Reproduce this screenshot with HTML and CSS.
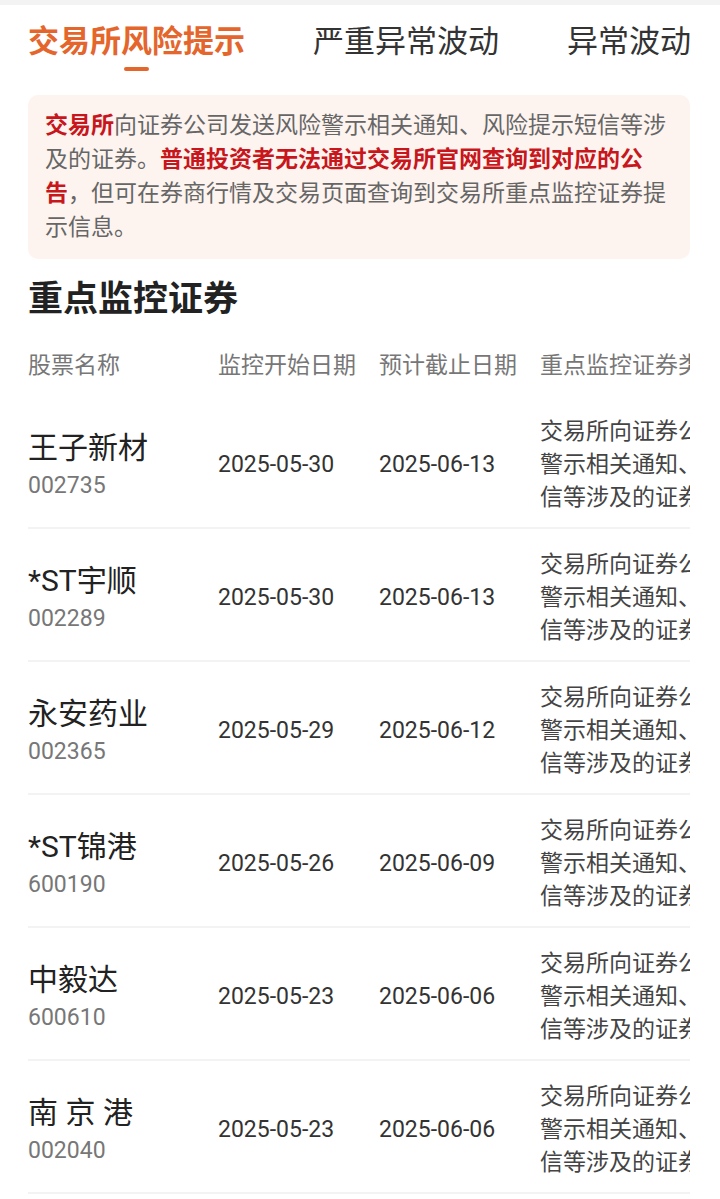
FILE: index.html
```html
<!DOCTYPE html>
<html lang="zh-CN">
<head>
  <meta charset="UTF-8">
  <meta name="viewport" content="width=device-width, initial-scale=1.0">
  <link rel="stylesheet" href="styles.css">
</head>
<body>
  <div class="top-band"></div>

  <nav class="tabs">
    <div class="tab active">交易所风险提示<span class="tab-line"></span></div>
    <div class="tab">严重异常波动</div>
    <div class="tab">异常波动</div>
  </nav>

  <div class="notice">
    <b>交易所</b>向证券公司发送风险警示相关通知、风险提示短信等涉及的证券。<b>普通投资者无法通过交易所官网查询到对应的公告</b>，但可在券商行情及交易页面查询到交易所重点监控证券提示信息。
  </div>

  <section class="watch">
    <h2>重点监控证券</h2>

    <div class="table">
      <div class="row head">
        <div>股票名称</div>
        <div>监控开始日期</div>
        <div>预计截止日期</div>
        <div>重点监控证券类型</div>
      </div>

      <div class="row">
        <div class="stock"><span class="name">王子新材</span><span class="code">002735</span></div>
        <div class="date">2025-05-30</div>
        <div class="date">2025-06-13</div>
        <div class="desc">交易所向证券公司发送风险警示相关通知、风险提示短信等涉及的证券</div>
      </div>

      <div class="row">
        <div class="stock"><span class="name">*ST宇顺</span><span class="code">002289</span></div>
        <div class="date">2025-05-30</div>
        <div class="date">2025-06-13</div>
        <div class="desc">交易所向证券公司发送风险警示相关通知、风险提示短信等涉及的证券</div>
      </div>

      <div class="row">
        <div class="stock"><span class="name">永安药业</span><span class="code">002365</span></div>
        <div class="date">2025-05-29</div>
        <div class="date">2025-06-12</div>
        <div class="desc">交易所向证券公司发送风险警示相关通知、风险提示短信等涉及的证券</div>
      </div>

      <div class="row">
        <div class="stock"><span class="name">*ST锦港</span><span class="code">600190</span></div>
        <div class="date">2025-05-26</div>
        <div class="date">2025-06-09</div>
        <div class="desc">交易所向证券公司发送风险警示相关通知、风险提示短信等涉及的证券</div>
      </div>

      <div class="row">
        <div class="stock"><span class="name">中毅达</span><span class="code">600610</span></div>
        <div class="date">2025-05-23</div>
        <div class="date">2025-06-06</div>
        <div class="desc">交易所向证券公司发送风险警示相关通知、风险提示短信等涉及的证券</div>
      </div>

      <div class="row">
        <div class="stock"><span class="name">南 京 港</span><span class="code">002040</span></div>
        <div class="date">2025-05-23</div>
        <div class="date">2025-06-06</div>
        <div class="desc">交易所向证券公司发送风险警示相关通知、风险提示短信等涉及的证券</div>
      </div>

      <div class="row">
        <div class="stock"><span class="name">国晟科技</span><span class="code">603778</span></div>
        <div class="date">2025-05-22</div>
        <div class="date">2025-06-05</div>
        <div class="desc">交易所向证券公司发送风险警示相关通知、风险提示短信等涉及的证券</div>
      </div>
    </div>
  </section>
</body>
</html>
```

FILE: styles.css
```css
body {
  font-family: Roboto, "Noto Sans CJK SC", sans-serif;
  background-color: #fff;
  color: #333;
  margin: 0;
  padding: 0;
  overflow: hidden;
}

.top-band {
  height: 5px;
  background-color: #f3f3f3;
}

.tabs {
  display: flex;
  gap: 68px;
  padding: 17px 28px 0;
}

.tab {
  display: flex;
  flex-direction: column;
  align-items: center;
  font-size: 31px;
  line-height: 40px;
  color: #333;
  white-space: nowrap;
}

.tab.active {
  color: #e4662c;
  font-weight: bold;
}

.tab-line {
  width: 25px;
  height: 4px;
  margin-top: 5px;
  border-radius: 2px;
  background-color: #e4662c;
}

.notice {
  margin: 24px 30px 0 28px;
  padding: 14px 17px;
  background-color: #fdf4f0;
  border-radius: 10px;
  font-size: 23px;
  line-height: 34px;
  color: #666;
}

.notice b {
  color: #c8161d;
}

.watch {
  padding: 0 30px 0 28px;
}

.watch h2 {
  margin: 19px 0 0;
  font-size: 35px;
  line-height: 44px;
  color: #222;
}

.table {
  overflow: hidden;
}

.row {
  display: grid;
  grid-template-columns: 190px 161px 161px 280px;
  align-items: center;
  border-bottom: 2px solid #f3f3f3;
  padding: 19px 0 13px;
}

.row.head {
  border-bottom: none;
  padding: 29px 0 15px;
  font-size: 23px;
  line-height: 30px;
  color: #777;
  white-space: nowrap;
}

.stock {
  display: flex;
  flex-direction: column;
}

.name {
  font-size: 30px;
  line-height: 40px;
  color: #222;
}

.code {
  margin-top: 2px;
  font-size: 23px;
  line-height: 32px;
  color: #777;
}

.date {
  font-size: 23px;
  color: #333;
}

.desc {
  font-size: 23px;
  line-height: 33px;
  color: #444;
}
```
